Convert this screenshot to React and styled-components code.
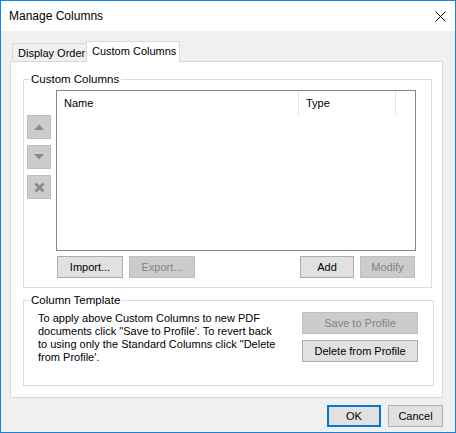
import React from 'react';
import styled, { createGlobalStyle } from 'styled-components';

const GlobalStyle = createGlobalStyle`
  html, body { margin: 0; padding: 0; background: #fff; }
  body { font-family: "Liberation Sans", Arial, sans-serif; font-size: 11px; color: #000; }
  * { box-sizing: border-box; }
`;

const Window = styled.div`
  width: 456px;
  height: 433px;
  border: 1px solid #1883d7;
  display: flex;
  flex-direction: column;
  background: #f0f0f0;
`;

const TitleBar = styled.div`
  height: 30px;
  flex: none;
  background: #fff;
  display: flex;
  align-items: center;
  justify-content: space-between;
  padding: 0 9px 0 8px;
  font-size: 12px;
`;

const Body = styled.div`
  flex: 1;
  display: flex;
  flex-direction: column;
  padding: 10px 12px 5px 9px;
`;

const TabRow = styled.div`
  height: 20px;
  display: flex;
  align-items: flex-end;
  padding-left: 2px;
  position: relative;
  z-index: 1;
`;

const Tab = styled.div`
  display: flex;
  align-items: center;
  border: 1px solid #d9d9d9;
  border-bottom: none;
  background: ${p => (p.$active ? '#fff' : '#f0f0f0')};
  height: ${p => (p.$active ? '21px' : '18px')};
  margin-bottom: ${p => (p.$active ? '-1px' : '0')};
  padding: ${p => (p.$active ? '0 0 3px 5px' : '0 0 0 5px')};
  width: ${p => p.$w}px;
  ${p => (p.$active ? '' : 'border-right: none;')}
  white-space: nowrap;
`;

const Panel = styled.div`
  flex: 1;
  background: #fff;
  border: 1px solid #d9d9d9;
  padding: 10px 10px 0 12px;
`;

const Group = styled.fieldset`
  margin: ${p => p.$mt}px ${p => p.$mr}px 0 0;
  border: 1px solid #dcdcdc;
  padding: ${p => p.$pad};
  min-width: 0;
`;

const Legend = styled.legend`
  margin-left: 3px;
  padding: 0 2px 0 1px;
  line-height: 14px;
  height: 14px;
  font-size: 11.5px;
`;

const ListArea = styled.div`
  display: flex;
  gap: 5px;
`;

const SideButtons = styled.div`
  display: flex;
  flex-direction: column;
  gap: 6px;
  padding-top: 25px;
`;

const IconButton = styled.div`
  width: 24px;
  height: 24px;
  background: #cccccc;
  border: 1px solid #bfbfbf;
  display: flex;
  align-items: center;
  justify-content: center;
`;

const ListBox = styled.div`
  flex: 1;
  height: 161px;
  border: 1px solid #828790;
  background: #fff;
`;

const HeaderRow = styled.div`
  display: flex;
  height: 24px;
`;

const HeaderCell = styled.div`
  width: ${p => p.$w}px;
  padding-left: 7px;
  border-right: 1px solid #e5e5e5;
  display: flex;
  align-items: center;
`;

const ButtonRow = styled.div`
  display: flex;
  gap: 6px;
  margin-top: 5px;
  padding: 0 1px 0 30px;
`;

const Spacer = styled.div`
  flex: 1;
`;

const Button = styled.div`
  width: ${p => p.$w}px;
  height: 22px;
  display: flex;
  align-items: center;
  justify-content: center;
  white-space: nowrap;
  background: ${p => (p.$disabled ? '#cccccc' : '#e1e1e1')};
  border: ${p => (p.$default ? '2px solid #0078d7' : p.$disabled ? '1px solid #bfbfbf' : '1px solid #adadad')};
  color: ${p => (p.$disabled ? '#838383' : '#000')};
`;

const TemplateRow = styled.div`
  display: flex;
  justify-content: space-between;
  padding-left: 11px;
`;

const TemplateText = styled.div`
  line-height: 13px;
  white-space: nowrap;
`;

const ProfileButtons = styled.div`
  display: flex;
  flex-direction: column;
  gap: 6px;
`;

const Footer = styled.div`
  display: flex;
  justify-content: flex-end;
  gap: 7px;
  margin-top: 7px;
`;

const Close = () => (
  <svg width="11" height="11" viewBox="0 0 11 11">
    <path d="M0.5 0.5 L10.5 10.5 M10.5 0.5 L0.5 10.5" stroke="#000" strokeWidth="1" fill="none" />
  </svg>
);

const Arrow = ({ dir }) => (
  <svg width="12" height="8" viewBox="0 0 12 8">
    {dir === 'up'
      ? <path d="M1 7 L6 1.5 L11 7 Z" fill="#8a8a8a" />
      : <path d="M1 1 L6 6.5 L11 1 Z" fill="#8a8a8a" />}
  </svg>
);

const Cross = () => (
  <svg width="11" height="11" viewBox="0 0 11 11">
    <path d="M1.5 1.5 L9.5 9.5 M9.5 1.5 L1.5 9.5" stroke="#8a8a8a" strokeWidth="2.6" fill="none" />
  </svg>
);

export default function App() {
  return (
    <>
      <GlobalStyle />
      <Window>
        <TitleBar>
          <span>Manage Columns</span>
          <Close />
        </TitleBar>
        <Body>
          <TabRow>
            <Tab $w={74}>Display Order</Tab>
            <Tab $active $w={94}>Custom Columns</Tab>
          </TabRow>
          <Panel>
            <Group $mt={0} $mr={0} $pad="4px 15px 9px 3px">
              <Legend>Custom Columns</Legend>
              <ListArea>
                <SideButtons>
                  <IconButton><Arrow dir="up" /></IconButton>
                  <IconButton><Arrow dir="down" /></IconButton>
                  <IconButton><Cross /></IconButton>
                </SideButtons>
                <ListBox>
                  <HeaderRow>
                    <HeaderCell $w={242}>Name</HeaderCell>
                    <HeaderCell $w={97}>Type</HeaderCell>
                  </HeaderRow>
                </ListBox>
              </ListArea>
              <ButtonRow>
                <Button $w={66}>Import...</Button>
                <Button $w={66} $disabled>Export...</Button>
                <Spacer />
                <Button $w={54}>Add</Button>
                <Button $w={55} $disabled>Modify</Button>
              </ButtonRow>
            </Group>
            <Group $mt={5} $mr={-2} $pad="5px 15px 21px 3px">
              <Legend>Column Template</Legend>
              <TemplateRow>
                <TemplateText>
                  To apply above Custom Columns to new PDF<br />
                  documents click "Save to Profile'. To revert back<br />
                  to using only the Standard Columns click "Delete<br />
                  from Profile'.
                </TemplateText>
                <ProfileButtons>
                  <Button $w={116} $disabled>Save to Profile</Button>
                  <Button $w={116}>Delete from Profile</Button>
                </ProfileButtons>
              </TemplateRow>
            </Group>
          </Panel>
          <Footer>
            <Button $w={54} $default>OK</Button>
            <Button $w={55}>Cancel</Button>
          </Footer>
        </Body>
      </Window>
    </>
  );
}
